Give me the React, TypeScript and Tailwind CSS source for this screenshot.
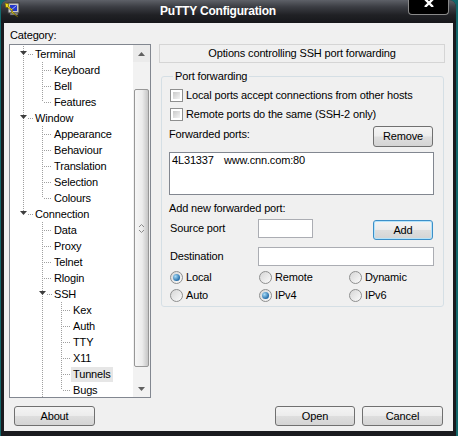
import type { ReactNode } from 'react';

type Row = { label: string; d: 0 | 1 | 2; exp?: boolean; sel?: boolean };

const rows: Row[] = [
    { label: 'Terminal', d: 0, exp: true },
    { label: 'Keyboard', d: 1 },
    { label: 'Bell', d: 1 },
    { label: 'Features', d: 1 },
    { label: 'Window', d: 0, exp: true },
    { label: 'Appearance', d: 1 },
    { label: 'Behaviour', d: 1 },
    { label: 'Translation', d: 1 },
    { label: 'Selection', d: 1 },
    { label: 'Colours', d: 1 },
    { label: 'Connection', d: 0, exp: true },
    { label: 'Data', d: 1 },
    { label: 'Proxy', d: 1 },
    { label: 'Telnet', d: 1 },
    { label: 'Rlogin', d: 1 },
    { label: 'SSH', d: 1, exp: true },
    { label: 'Kex', d: 2 },
    { label: 'Auth', d: 2 },
    { label: 'TTY', d: 2 },
    { label: 'X11', d: 2 },
    { label: 'Tunnels', d: 2, sel: true },
    { label: 'Bugs', d: 2 },
];

// which vertical guide lines pass through each row (full height or top half only)
const v0Full = [0, 1, 2, 3, 4, 5, 6, 7, 8, 9];
const v0Half = [10];
const v1Full = [1, 2, 5, 6, 7, 8, 11, 12, 13, 14, 15, 16, 17, 18, 19, 20, 21];
const v1Half = [3, 9];
const v2Full = [16, 17, 18, 19, 20];
const v2Half = [21];

const cols = [13.5, 32.5, 51.5];
const widths = [23, 42, 61];

function TreeLines({ i, row }: { i: number; row: Row }) {
    const dot = { stroke: '#a0a0a0', strokeDasharray: '1 1', strokeWidth: 1 };
    const vert = (x: number, full: boolean) => <line x1={x} y1={0} x2={x} y2={full ? 16 : 8} {...dot} />;
    const c = cols[row.d];
    return (
        <svg width={widths[row.d]} height={16} className="shrink-0" shapeRendering="crispEdges">
            {v0Full.includes(i) && vert(cols[0], true)}
            {v0Half.includes(i) && vert(cols[0], false)}
            {v1Full.includes(i) && vert(cols[1], true)}
            {v1Half.includes(i) && vert(cols[1], false)}
            {v2Full.includes(i) && vert(cols[2], true)}
            {v2Half.includes(i) && vert(cols[2], false)}
            {row.exp ? (
                <>
                    <line x1={c + 4} y1={8.5} x2={c + 10} y2={8.5} {...dot} />
                    <polygon points={`${c - 3.5},5 ${c + 3.5},5 ${c},9`} fill="#3d3d3d" shapeRendering="auto" />
                </>
            ) : (
                <line x1={c + 1} y1={8.5} x2={c + 10} y2={8.5} {...dot} />
            )}
        </svg>
    );
}

function Btn({ children, className }: { children: ReactNode; className: string }) {
    return (
        <button className={`flex items-center justify-center rounded-[3px] border bg-[linear-gradient(#f4f4f4_0%,#ececec_48%,#dedede_52%,#d4d4d4_100%)] text-[11px] leading-none ${className}`}>
            {children}
        </button>
    );
}

function Check({ label }: { label: string }) {
    return (
        <div className="flex items-center h-[13px] ml-[1px] gap-[3px]">
            <span className="w-[13px] h-[13px] border border-[#8e8f8f] bg-white p-[2px]">
                <span className="block w-full h-full bg-[linear-gradient(135deg,#c9c9c9,#f4f4f4)]" />
            </span>
            <span className="leading-[13px]">{label}</span>
        </div>
    );
}

function Radio({ label, on }: { label: string; on?: boolean }) {
    return (
        <div className="flex items-center h-[13px] ml-[1px] gap-[3px]">
            <span className="w-[13px] h-[13px] rounded-full border border-[#8e8f8f] bg-[linear-gradient(135deg,#d6d6d6,#fbfbfb)] flex items-center justify-center">
                {on && <span className="w-[7px] h-[7px] rounded-full bg-[radial-gradient(circle_at_35%_35%,#a8dcf8,#1b65a3_75%)]" />}
            </span>
            <span className="leading-[13px]">{label}</span>
        </div>
    );
}

function PuttyIcon() {
    return (
        <svg width="16" height="16" viewBox="0 0 16 16" className="shrink-0">
            <rect x="4" y="1" width="11" height="10" fill="#c8c8c8" stroke="#3a3a3a" />
            <rect x="6" y="3" width="7" height="6" fill="#2436c8" />
            <path d="M6.5 8.5 L12.5 3.5" stroke="#9bb0ff" strokeWidth="1" />
            <rect x="6" y="11" width="8" height="2" fill="#9a9a9a" stroke="#3a3a3a" strokeWidth="0.6" />
            <path d="M1 1 L5 2 L4 4 L9 8 L8 9 L14 15 L7 10 L8 9 L3 5 L2 6 Z" fill="#f4e31c" stroke="#6b5a00" strokeWidth="0.6" />
        </svg>
    );
}

export default function App() {
    return (
        <div className="w-[458px] h-[436px] bg-[#12686b] pl-px pr-[2px] font-['Liberation_Sans',Arial,sans-serif] text-[11px] text-black tracking-[-0.15px]">
            <div className="h-full flex flex-col rounded-t-[7px] bg-[#1a1b1f] overflow-hidden">
                {/* title bar */}
                <div className="h-[23px] shrink-0 flex items-start pl-[3px] bg-[linear-gradient(#5e6168_0%,#3b3d43_30%,#202125_65%,#16171a_100%)]">
                    <div className="mt-[2px]">
                        <PuttyIcon />
                    </div>
                    <div className="flex-1 text-center pl-[8px] pt-[4px] text-white font-bold text-[12px] leading-[14px] tracking-[-0.2px]">PuTTY Configuration</div>
                    <div className="w-[41px] h-[15px] mr-[7px] bg-black border border-t-0 border-[#8a8a8a] rounded-b-[4px] flex justify-center">
                        <svg width="10" height="8" viewBox="0 0 10 8" className="-mt-px">
                            <path d="M1 0 L9 8 M9 0 L1 8" stroke="#ffffff" strokeWidth="2.4" />
                        </svg>
                    </div>
                </div>

                {/* client area */}
                <div className="flex-1 mx-[3px] mb-[5px] bg-[#f0f0f0] flex flex-col pl-[5px]">
                    <div className="flex">
                        <div className="w-[142px] shrink-0">
                            <div className="mt-[6px] h-[13px] leading-[13px] ml-[1px]">Category:</div>
                            <div className="mt-[2px] h-[354px] border border-[#828790] bg-white flex">
                                <div className="flex-1 pt-[1px] overflow-hidden">
                                    {rows.map((r, i) => (
                                        <div key={r.label} className="h-[16px] flex items-center">
                                            <TreeLines i={i} row={r} />
                                            <span className={`px-[2px] h-[15px] leading-[15px] ${r.sel ? 'bg-[#e6e6e6]' : ''}`}>{r.label}</span>
                                        </div>
                                    ))}
                                </div>
                                <div className="w-[17px] shrink-0 bg-[#f2f2f2] flex flex-col">
                                    <div className="h-[17px] flex items-center justify-center bg-[#ebebeb]">
                                        <svg width="7" height="4" viewBox="0 0 7 4">
                                            <polygon points="0,4 7,4 3.5,0" fill="#606060" />
                                        </svg>
                                    </div>
                                    <div className="flex-1">
                                        <div className="mt-[27px] mx-[1px] h-[278px] rounded-[2px] border border-[#979797] bg-[linear-gradient(90deg,#f6f6f6_0%,#ececec_55%,#d2d2d2_85%,#c6c6c6_100%)] flex items-center justify-center">
                                            <svg width="7" height="9" viewBox="0 0 7 9">
                                                <path d="M1 3 L3.5 0.5 L6 3 M1 6 L3.5 8.5 L6 6" stroke="#8a8a8a" fill="none" />
                                            </svg>
                                        </div>
                                    </div>
                                    <div className="h-[17px] flex items-center justify-center">
                                        <svg width="7" height="4" viewBox="0 0 7 4">
                                            <polygon points="0,0 7,0 3.5,4" fill="#606060" />
                                        </svg>
                                    </div>
                                </div>
                            </div>
                        </div>

                        <div className="ml-[8px] pt-[21px]">
                            <div className="w-[286px] h-[19px] border border-[#d5d5d5] text-center leading-[17px]">Options controlling SSH port forwarding</div>

                            <fieldset className="mt-[7px] ml-[2px] w-[283px] rounded-[3px] border border-[#d5dfe5] pl-[7px] pb-[4px]">
                                <legend className="ml-[4px] px-[2px] leading-[13px]">Port forwarding</legend>
                                <div className="w-[265px]">
                                    <div className="mt-[6px]">
                                        <Check label="Local ports accept connections from other hosts" />
                                    </div>
                                    <div className="mt-[6px]">
                                        <Check label="Remote ports do the same (SSH-2 only)" />
                                    </div>
                                    <div className="mt-[5px] flex items-start justify-between">
                                        <span className="mt-[2px] leading-[13px]">Forwarded ports:</span>
                                        <Btn className="w-[60px] h-[21px] mr-[1px] border-[#707070]">Remove</Btn>
                                    </div>
                                    <div className="mt-[5px] h-[43px] border border-[#828790] bg-white px-[2px] pt-[1px] leading-[13px]">
                                        <span className="inline-block w-[52px]">4L31337</span>
                                        <span>www.cnn.com:80</span>
                                    </div>
                                    <div className="mt-[7px] h-[13px] leading-[13px]">Add new forwarded port:</div>
                                    <div className="mt-[4px] flex items-start">
                                        <span className="w-[89px] pt-[3px] pl-[1px] leading-[13px]">Source port</span>
                                        <span className="w-[55px] h-[19px] border border-[#abadb3] bg-white" />
                                        <Btn className="ml-auto mt-[1px] mr-[1px] w-[60px] h-[20px] border-[#3c8fc8] shadow-[inset_0_0_0_1px_#b4e3fa]">Add</Btn>
                                    </div>
                                    <div className="mt-[7px] flex items-start">
                                        <span className="w-[89px] pt-[3px] pl-[1px] leading-[13px]">Destination</span>
                                        <span className="w-[177px] h-[19px] border border-[#abadb3] bg-white" />
                                    </div>
                                    <div className="mt-[5px] grid grid-cols-[89px_90px_1fr] gap-y-[5px]">
                                        <Radio label="Local" on />
                                        <Radio label="Remote" />
                                        <Radio label="Dynamic" />
                                        <Radio label="Auto" />
                                        <Radio label="IPv4" on />
                                        <Radio label="IPv6" />
                                    </div>
                                </div>
                            </fieldset>
                        </div>
                    </div>

                    <div className="mt-[8px] flex pr-[10px]">
                        <Btn className="ml-[5px] w-[81px] h-[20px] border-[#707070]">About</Btn>
                        <Btn className="ml-auto w-[80px] h-[20px] border-[#707070]">Open</Btn>
                        <Btn className="ml-[7px] w-[81px] h-[20px] border-[#707070]">Cancel</Btn>
                    </div>
                </div>
            </div>
        </div>
    );
}
